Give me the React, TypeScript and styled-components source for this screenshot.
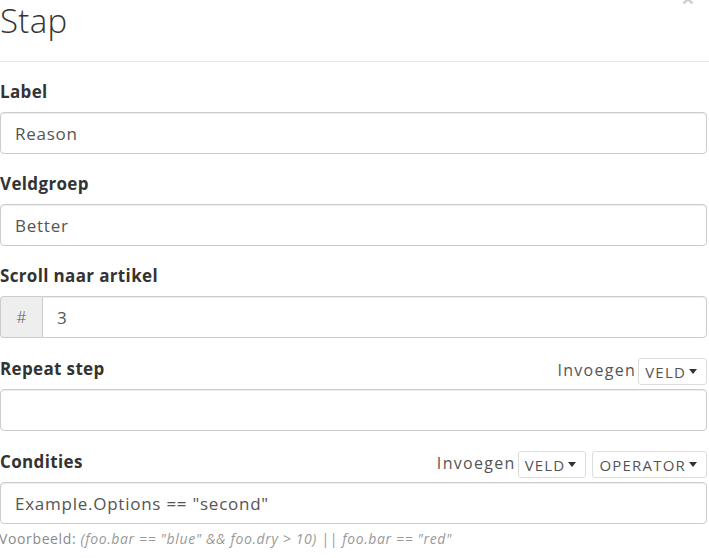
import styled, { createGlobalStyle } from 'styled-components';

const GlobalStyle = createGlobalStyle`
  body {
    margin: 0;
    background: #fff;
    font-family: "Open Sans", "Liberation Sans", sans-serif;
    color: #333;
    overflow: hidden;
  }
`;

const Modal = styled.div`
  width: 709px;
  height: 558px;
  overflow: hidden;
`;

const Header = styled.div`
  display: flex;
  align-items: flex-start;
  justify-content: space-between;
  height: 61px;
  border-bottom: 1px solid #e5e5e5;
`;

const Title = styled.h4`
  margin: 0;
  font-size: 33px;
  font-weight: 300;
  line-height: 42px;
  letter-spacing: 0.3px;
  color: #333;
`;

const Close = styled.button`
  margin: -12px 15px 0 0;
  padding: 0;
  border: 0;
  background: transparent;
  font-family: "Liberation Sans", sans-serif;
  font-size: 21px;
  font-weight: 700;
  line-height: 21px;
  color: #000;
  opacity: 0.2;
`;

const Body = styled.div`
  padding: 15px 2px 0 0;
`;

const Group = styled.div`
  margin-bottom: 15px;
`;

const LabelRow = styled.div<{ $tools?: boolean }>`
  display: flex;
  align-items: flex-end;
  justify-content: space-between;
  height: ${(p) => (p.$tools ? '32px' : '31px')};
  margin-bottom: 4px;
`;

const Label = styled.label`
  margin-bottom: 6px;
  font-size: 17px;
  font-weight: 700;
  line-height: 20px;
  letter-spacing: 0.35px;
  color: #333;
`;

const Inserts = styled.div`
  display: flex;
  align-items: flex-end;
  gap: 6px;
`;

const InsertText = styled.span`
  margin: 0 -4px 5px 0;
  font-size: 16px;
  line-height: 20px;
  letter-spacing: 1.3px;
  color: #555;
`;

const DropButton = styled.button`
  display: flex;
  align-items: center;
  gap: 3px;
  height: 27px;
  padding: 0 9px 0 6px;
  border: 1px solid #ddd;
  border-radius: 3px;
  background: #fff;
  font-family: inherit;
  font-size: 15px;
  letter-spacing: 1.2px;
  color: #555;
`;

const Caret = styled.span`
  width: 0;
  height: 0;
  border-top: 5px solid #333;
  border-left: 4.5px solid transparent;
  border-right: 4.5px solid transparent;
`;

const InputGroup = styled.div`
  display: flex;
`;

const Addon = styled.span`
  display: flex;
  align-items: center;
  justify-content: center;
  width: 41px;
  height: 40px;
  border: 1px solid #ccc;
  border-right: 0;
  border-radius: 4px 0 0 4px;
  background: #eee;
  font-size: 16px;
  font-weight: 300;
  color: #555;
`;

const Input = styled.input<{ $grouped?: boolean }>`
  box-sizing: border-box;
  flex: 1;
  width: 100%;
  height: 42px;
  padding: 0 14px;
  border: 1px solid #ccc;
  border-radius: ${(p) => (p.$grouped ? '0 4px 4px 0' : '4px')};
  box-shadow: inset 0 1px 1px rgba(0, 0, 0, 0.075);
  font-family: inherit;
  font-size: 17px;
  letter-spacing: 0.75px;
  color: #555;
  background: #fff;
`;

const Help = styled.p`
  margin: 5px 0 0 -1px;
  font-size: 14px;
  line-height: 20px;
  letter-spacing: 0.63px;
  color: #8a8a8a;
`;

const Example = styled.em`
  color: #999;
`;

const Insert = ({ buttons }: { buttons: string[] }): JSX.Element => (
  <Inserts>
    <InsertText>Invoegen</InsertText>
    {buttons.map((b) => (
      <DropButton key={b}>
        {b}
        <Caret />
      </DropButton>
    ))}
  </Inserts>
);

export default function App(): JSX.Element {
  return (
    <>
      <GlobalStyle />
      <Modal>
        <Header>
          <Title>Stap</Title>
          <Close>×</Close>
        </Header>
        <Body>
          <Group>
            <LabelRow>
              <Label>Label</Label>
            </LabelRow>
            <Input defaultValue="Reason" />
          </Group>
          <Group>
            <LabelRow>
              <Label>Veldgroep</Label>
            </LabelRow>
            <Input defaultValue="Better" />
          </Group>
          <Group>
            <LabelRow>
              <Label>Scroll naar artikel</Label>
            </LabelRow>
            <InputGroup>
              <Addon>#</Addon>
              <Input $grouped defaultValue="3" />
            </InputGroup>
          </Group>
          <Group>
            <LabelRow $tools>
              <Label>Repeat step</Label>
              <Insert buttons={['VELD']} />
            </LabelRow>
            <Input defaultValue="" />
          </Group>
          <Group>
            <LabelRow $tools>
              <Label>Condities</Label>
              <Insert buttons={['VELD', 'OPERATOR']} />
            </LabelRow>
            <Input defaultValue={'Example.Options == "second"'} />
            <Help>
              Voorbeeld:{' '}
              <Example>(foo.bar == "blue" &amp;&amp; foo.dry &gt; 10) || foo.bar == "red"</Example>
            </Help>
          </Group>
        </Body>
      </Modal>
    </>
  );
}
